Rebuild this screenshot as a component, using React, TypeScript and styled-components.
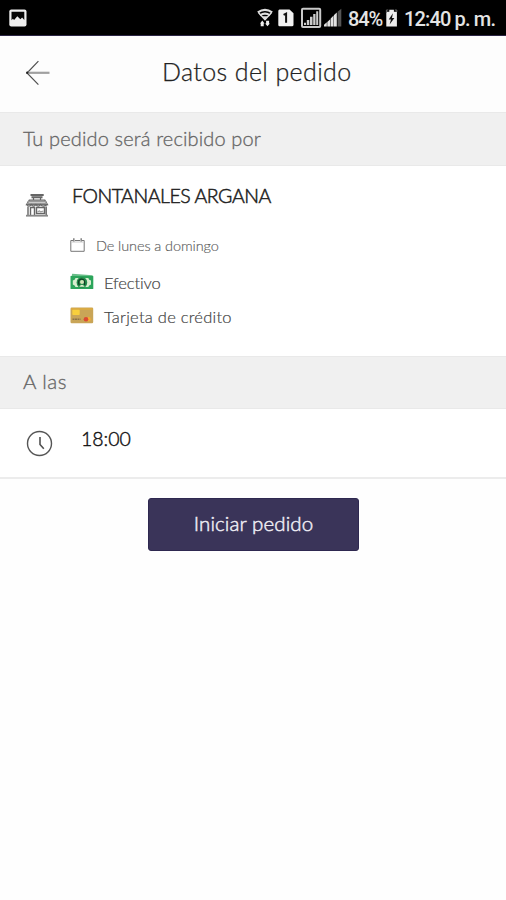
import React from "react";
import styled, { createGlobalStyle } from "styled-components";

const Global = createGlobalStyle`
  * { box-sizing: border-box; }
  body { margin: 0; background: #fff; font-family: Lato, "Open Sans", sans-serif; }
  svg { display: block; flex: none; }
`;

const Page = styled.main`
  width: 506px;
  height: 900px;
  background: #fefefe;
  overflow: hidden;
`;

const StatusBar = styled.div`
  height: 36px;
  padding: 0 0 0 9px;
  display: flex;
  align-items: center;
  background: #000;
  border-bottom: 1px solid #2b2544;
  color: #e4e4e4;
`;

const StatusIcons = styled.div`
  margin-left: auto;
  width: 91px;
  height: 35px;
`;

const StatusText = styled.span<{ $width: number; $spacing: number }>`
  width: ${p => p.$width}px;
  padding-top: 2px;
  font: 500 20px/28px Roboto, sans-serif;
  letter-spacing: ${p => p.$spacing}px;
  white-space: nowrap;
`;

const Header = styled.header`
  height: 76px;
  display: grid;
  grid-template-columns: 162px 1fr;
  align-items: center;
  padding-bottom: 5px;
  background: #fdfdfd;
`;

const BackButton = styled.button`
  width: 26px;
  height: 26px;
  margin: 3px 0 0 25px;
  padding: 0;
  border: 0;
  background: none;
`;

const Label = styled.span<{
  $size: number;
  $color: string;
  $spacing?: number;
  $stroke?: number;
}>`
  font-size: ${p => p.$size}px;
  line-height: 30px;
  color: ${p => p.$color};
  font-weight: 300;
  letter-spacing: ${p => p.$spacing ?? 0}px;
  -webkit-text-stroke: ${p => p.$stroke ?? 0}px currentColor;
  font-variant-ligatures: none;
  white-space: nowrap;
`;

const Title = styled(Label)`
  margin: 0 0 1px;
`;

const SectionBand = styled.h2<{ $height: number; $lift: number }>`
  margin: 0;
  height: ${p => p.$height}px;
  padding: 0 0 ${p => p.$lift}px 23px;
  display: flex;
  align-items: center;
  background: #f0f0f0;
  border-top: 1px solid #e9e9e9;
  border-bottom: 1px solid #e9e9e9;
`;

const StoreCard = styled.section`
  height: 190px;
  padding: 15px 0 0 25px;
  display: flex;
  background: #fff;
`;

const StoreIcon = styled.div`
  width: 47px;
  padding-top: 12px;
`;

const StoreInfo = styled.div`
  display: flex;
  flex-direction: column;
`;

const InfoRow = styled.div<{ $top: number; $gap: number }>`
  height: 30px;
  margin-top: ${p => p.$top}px;
  margin-left: -2px;
  display: flex;
  align-items: center;
  gap: ${p => p.$gap}px;

  svg {
    margin-bottom: 3px;
  }
`;

const TimeRow = styled.section`
  height: 70px;
  padding: 15px 0 0 26px;
  display: flex;
  gap: 28px;
  background: #fff;
  border-bottom: 2px solid #ececec;
`;

const TimeIcon = styled.div`
  padding-top: 6px;
`;

const StartButton = styled.button`
  display: flex;
  align-items: center;
  justify-content: center;
  width: 211px;
  height: 53px;
  margin: 19px 0 0 148px;
  padding: 0 0 3px;
  border: 1px solid #2e2850;
  border-radius: 3px;
  background: #3a3459;
  font-family: inherit;
`;

const PictureIcon = () => (
  <svg width="18" height="18" viewBox="0 0 18 18">
    <rect x="0.3" y="0.5" width="17.2" height="17" rx="2" fill="#eee" />
    <path d="M2.5 2.7h12.8v8.2l-2.2-2.4-1.7 1.8-3.1-3-3.2 3.6-1.2-1.2-1.4 1.6z" fill="#050505" />
  </svg>
);

const ConnectionIcons = () => (
  <svg width="91" height="35" viewBox="257 0 91 35">
    <g fill="none" stroke="#ddd">
      <path d="M257.8 12.3q7.2-5 14.4 0M260 15.3q5-3.400 10 0" strokeWidth="2.200" />
      <path d="M258.400 12.500l6.600 7.300 6.600-7.300" strokeWidth="1.400" />
    </g>
    <path d="M262 16.300h6L265 20z" fill="#ddd" />
    <path d="M262.300 20.500l2.200 3h-.8v2.700h-3v-2.700H260zM267.500 26.200l-2.400-2.800h1v-2.700h3v2.700h.8z" fill="#eee" />
    <path d="M279.500 9.500h10l4 3.700v11.600q0 1.500-1.500 1.500h-12.500q-1.200 0-1.200-1.500V11q0-1.500 1.200-1.500z" fill="#f2f2f2" />
    <path d="M283.600 14.800l2.500-1.200v9.200" fill="none" stroke="#111" strokeWidth="2" />
    <rect x="302" y="8.700" width="18.200" height="18.200" rx="1" fill="none" stroke="#c9c9c9" strokeWidth="2" />
    <path d="M304 25h2v-2.200h-2zM306.800 25h2.500v-5h-2.500zM310 25h2.500v-8.300H310zM313.200 25h2.300V14h-2.300zM316.200 25h2V11.200h-2z" fill="#ccc" />
    <path d="M324 26.500v-1.800l2.800-2.400v4.200zM327.300 26.500V22l2.900-2.800v7.300zM330.700 26.500v-8l2.900-3v11zM334 26.500V15l2.800-2.500v14z" fill="#e2e2e2" />
    <path d="M337.600 26.500V11.800l3.700-3v17.700z" fill="#555" />
  </svg>
);

const BatteryIcon = () => (
  <svg width="21" height="35" viewBox="383 0 21 35">
    <path d="M389.300 9.800h4.600v2h3v14.700h-10.600V11.800h3z" fill="#eee" />
    <path d="M386.400 12.800V10h2M396.800 12V10h-2" fill="none" stroke="#666" />
    <path d="M392.900 13.300l-4.200 6.200h2.300l-1.400 4.900 4.800-6.500h-2.400z" fill="#111" />
  </svg>
);

const ArrowIcon = () => (
  <svg width="26" height="26" viewBox="0 0 26 26" fill="none">
    <path d="M13.400 1.100L2 13l11.400 11.600" stroke="#505050" strokeWidth="1.200" />
    <path d="M2 12.800h22.500" stroke="#a0a0a0" strokeWidth="2.200" />
    <circle cx="2.300" cy="12.800" r="1.200" fill="#222" />
  </svg>
);

const ShopIcon = () => (
  <svg width="24" height="25" viewBox="0 0 24 25" fill="none" stroke="#666" strokeWidth="1.200">
    <path d="M5.500 2h13.200M6.500 4.300h11" strokeWidth="1.900" />
    <path d="M8.500 4v3M15.500 4v3M4.300 7.200h15.500l2.700 4.500h-21z" />
    <path d="M2.500 8.700h19M2 10.600h20" stroke="#999" strokeWidth="1.400" />
    <path d="M1.500 11.500q2.500 3.200 4.700 0 2.400 3.200 4.700 0 2.400 3.200 4.700 0 2.400 3.200 6.800 0" />
    <path d="M3 13.500v9M21.200 13.500v9M5.500 22v-7.500h4V22M11.500 14.500h8v6h-8z" strokeWidth="1.400" />
    <path d="M12.500 18.800l2-.8 1.200.9 2.800-.9" stroke="#999" />
    <path d="M1 22.700h22" stroke="#888" strokeWidth="1.800" />
  </svg>
);

const CalendarIcon = () => (
  <svg width="15" height="14" viewBox="0 0 15 14" fill="none" stroke="#777" strokeWidth="1">
    <path d="M3 2.500H.8v10.800h13.400V2.500H12M5 2.500h5" />
    <path d="M1 4h13" stroke="#ccc" />
    <path d="M3.800.3v3.200M11.200.3v3.200" stroke="#888" strokeWidth="1.600" />
  </svg>
);

const CashIcon = () => (
  <svg width="24" height="18" viewBox="0 0 24 18">
    <path d="M2.200.8l20.400 1.500v3H1z" fill="#67bd87" />
    <rect x=".5" y="3" width="22.800" height="13" rx=".6" fill="#2ca55b" />
    <path d="M5.500 5h12.800q.4 2 2.700 2.500v4q-2.300.5-2.700 2.500H5.500q-.4-2-2.700-2.500v-4Q5.100 7 5.500 5z" fill="#d9edcf" />
    <ellipse cx="11.900" cy="9.500" rx="5.300" ry="5.500" fill="#258c4b" />
    <path d="M9.200 12q-2-5 2-5.800 4-.4 3.400 5.800" fill="none" stroke="#123e24" strokeWidth="1.300" />
    <circle cx="12" cy="9" r="2" fill="#d3e4b8" />
    <path d="M9.200 13.800q2.700-4 5.500 0z" fill="#e0edcb" />
  </svg>
);

const CardIcon = () => (
  <svg width="24" height="17" viewBox="0 0 24 17">
    <rect x=".5" y=".5" width="22.700" height="15.700" rx="1.200" fill="#c9a557" />
    <path d="M1 1h21.700v2H1z" fill="#d9aa45" />
    <rect x="2.300" y="2.800" width="7.400" height="5.200" rx=".8" fill="#f8cf3c" />
    <path d="M2.500 12.300h8" stroke="#8d7448" strokeWidth="1.400" strokeDasharray="2 .5" />
    <circle cx="18.500" cy="12.200" r="2.300" fill="#f5ac32" />
    <circle cx="16" cy="12.200" r="2.300" fill="#db4932" />
  </svg>
);

const ClockIcon = () => (
  <svg width="27" height="27" viewBox="0 0 27 27" fill="none">
    <circle cx="13.500" cy="13.500" r="12" stroke="#555" strokeWidth="1.400" />
    <path d="M14 7v7.500l3.800 4.300" stroke="#505050" strokeWidth="1.600" />
  </svg>
);

export default function App() {
  return (
    <Page>
      <Global />
      <StatusBar>
        <PictureIcon />
        <StatusIcons><ConnectionIcons /></StatusIcons>
        <StatusText $width={35} $spacing={-1.1}>84%</StatusText>
        <BatteryIcon />
        <StatusText $width={102} $spacing={-0.85}>12:40 p. m.</StatusText>
      </StatusBar>
      <Header>
        <BackButton aria-label="Volver"><ArrowIcon /></BackButton>
        <Title as="h1" $size={25} $color="#222" $spacing={0.38} $stroke={0.25}>Datos del pedido</Title>
      </Header>
      <SectionBand $height={54} $lift={3}>
        <Label $size={20} $color="#666" $spacing={0.14} $stroke={0.3}>Tu pedido será recibido por</Label>
      </SectionBand>
      <StoreCard>
        <StoreIcon><ShopIcon /></StoreIcon>
        <StoreInfo>
          <Label $size={19.5} $color="#222" $spacing={-0.46} $stroke={0.5}>FONTANALES ARGANA</Label>
          <InfoRow $top={20} $gap={11}>
            <CalendarIcon />
            <Label $size={14.5} $color="#5c5c5c" $spacing={-0.1} $stroke={0.15}>De lunes a domingo</Label>
          </InfoRow>
          <InfoRow $top={7} $gap={10}>
            <CashIcon />
            <Label $size={16.5} $color="#444" $spacing={-0.1} $stroke={0.2}>Efectivo</Label>
          </InfoRow>
          <InfoRow $top={4} $gap={10}>
            <CardIcon />
            <Label $size={16.5} $color="#444" $spacing={0.25} $stroke={0.2}>Tarjeta de crédito</Label>
          </InfoRow>
        </StoreInfo>
      </StoreCard>
      <SectionBand $height={53} $lift={4}>
        <Label $size={20.5} $color="#666" $spacing={0.5} $stroke={0.3}>A las</Label>
      </SectionBand>
      <TimeRow>
        <TimeIcon><ClockIcon /></TimeIcon>
        <Label $size={19.5} $color="#111" $stroke={0.4}>18:00</Label>
      </TimeRow>
      <StartButton>
        <Label $size={20.5} $color="#eeecf3" $spacing={0.1} $stroke={0.5}>Iniciar pedido</Label>
      </StartButton>
    </Page>
  );
}
